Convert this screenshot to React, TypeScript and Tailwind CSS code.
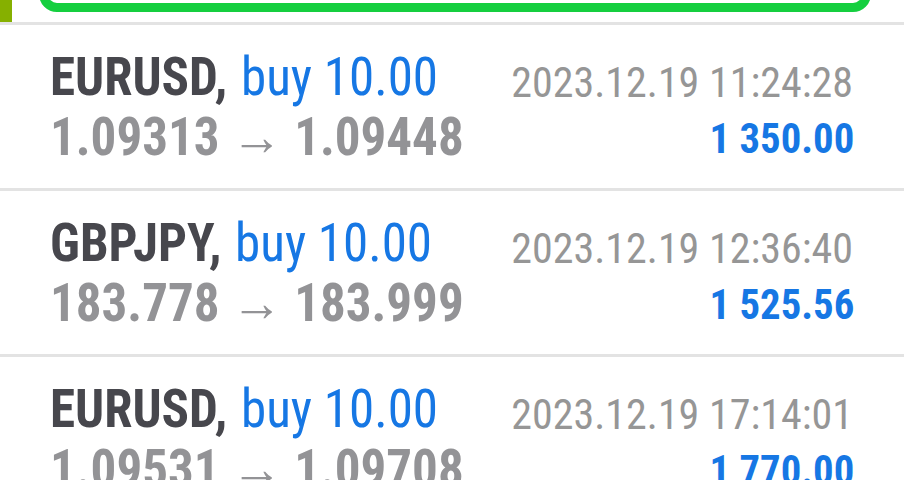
import React from "react";

const rows = [
  { sym: "EURUSD", vol: "buy 10.00", open: "1.09313", close: "1.09448", time: "2023.12.19 11:24:28", profit: "1 350.00" },
  { sym: "GBPJPY", vol: "buy 10.00", open: "183.778", close: "183.999", time: "2023.12.19 12:36:40", profit: "1 525.56" },
  { sym: "EURUSD", vol: "buy 10.00", open: "1.09531", close: "1.09708", time: "2023.12.19 17:14:01", profit: "1 770.00" },
];

export default function App() {
  return (
    <div
      className="w-[904px] h-[480px] overflow-hidden bg-white"
      style={{ fontFamily: '"Roboto Condensed", Roboto, "Liberation Sans", sans-serif' }}
    >
      <div className="flex h-[22px] overflow-hidden">
        <div className="w-[12px] h-[22px] bg-[#86b000] shrink-0" />
        <div className="ml-[27px] w-[832px] h-[42px] mt-[-30px] border-[9px] border-[#15cf3f] rounded-[18px] shrink-0" />
      </div>
      <div className="h-[3px] bg-[#e3e3e3]" />
      {rows.map((r, i) => (
        <div key={i}>
          <div className="h-[163px] flex justify-between pl-[50px] pr-[51px]">
            <div className="flex flex-col pt-[22px] text-[54px] leading-[60px] font-bold whitespace-nowrap origin-left scale-x-[0.945]">
              <div>
                <span className="text-[#47474d]">{r.sym},</span>{" "}
                <span className="text-[#1677e4] font-normal ml-[2px]">{r.vol}</span>
              </div>
              <div className="text-[#939396]">
                {r.open} <span className="font-normal">→</span> {r.close}
              </div>
            </div>
            <div className="flex flex-col items-end pt-[30px] text-[42px] leading-[56px] whitespace-nowrap">
              <div className="text-[#969696]">{r.time}</div>
              <div className="text-[#1677e4] font-bold origin-right scale-x-[0.97] mr-[-1px]">{r.profit}</div>
            </div>
          </div>
          <div className="h-[3px] bg-[#e3e3e3]" />
        </div>
      ))}
    </div>
  );
}
